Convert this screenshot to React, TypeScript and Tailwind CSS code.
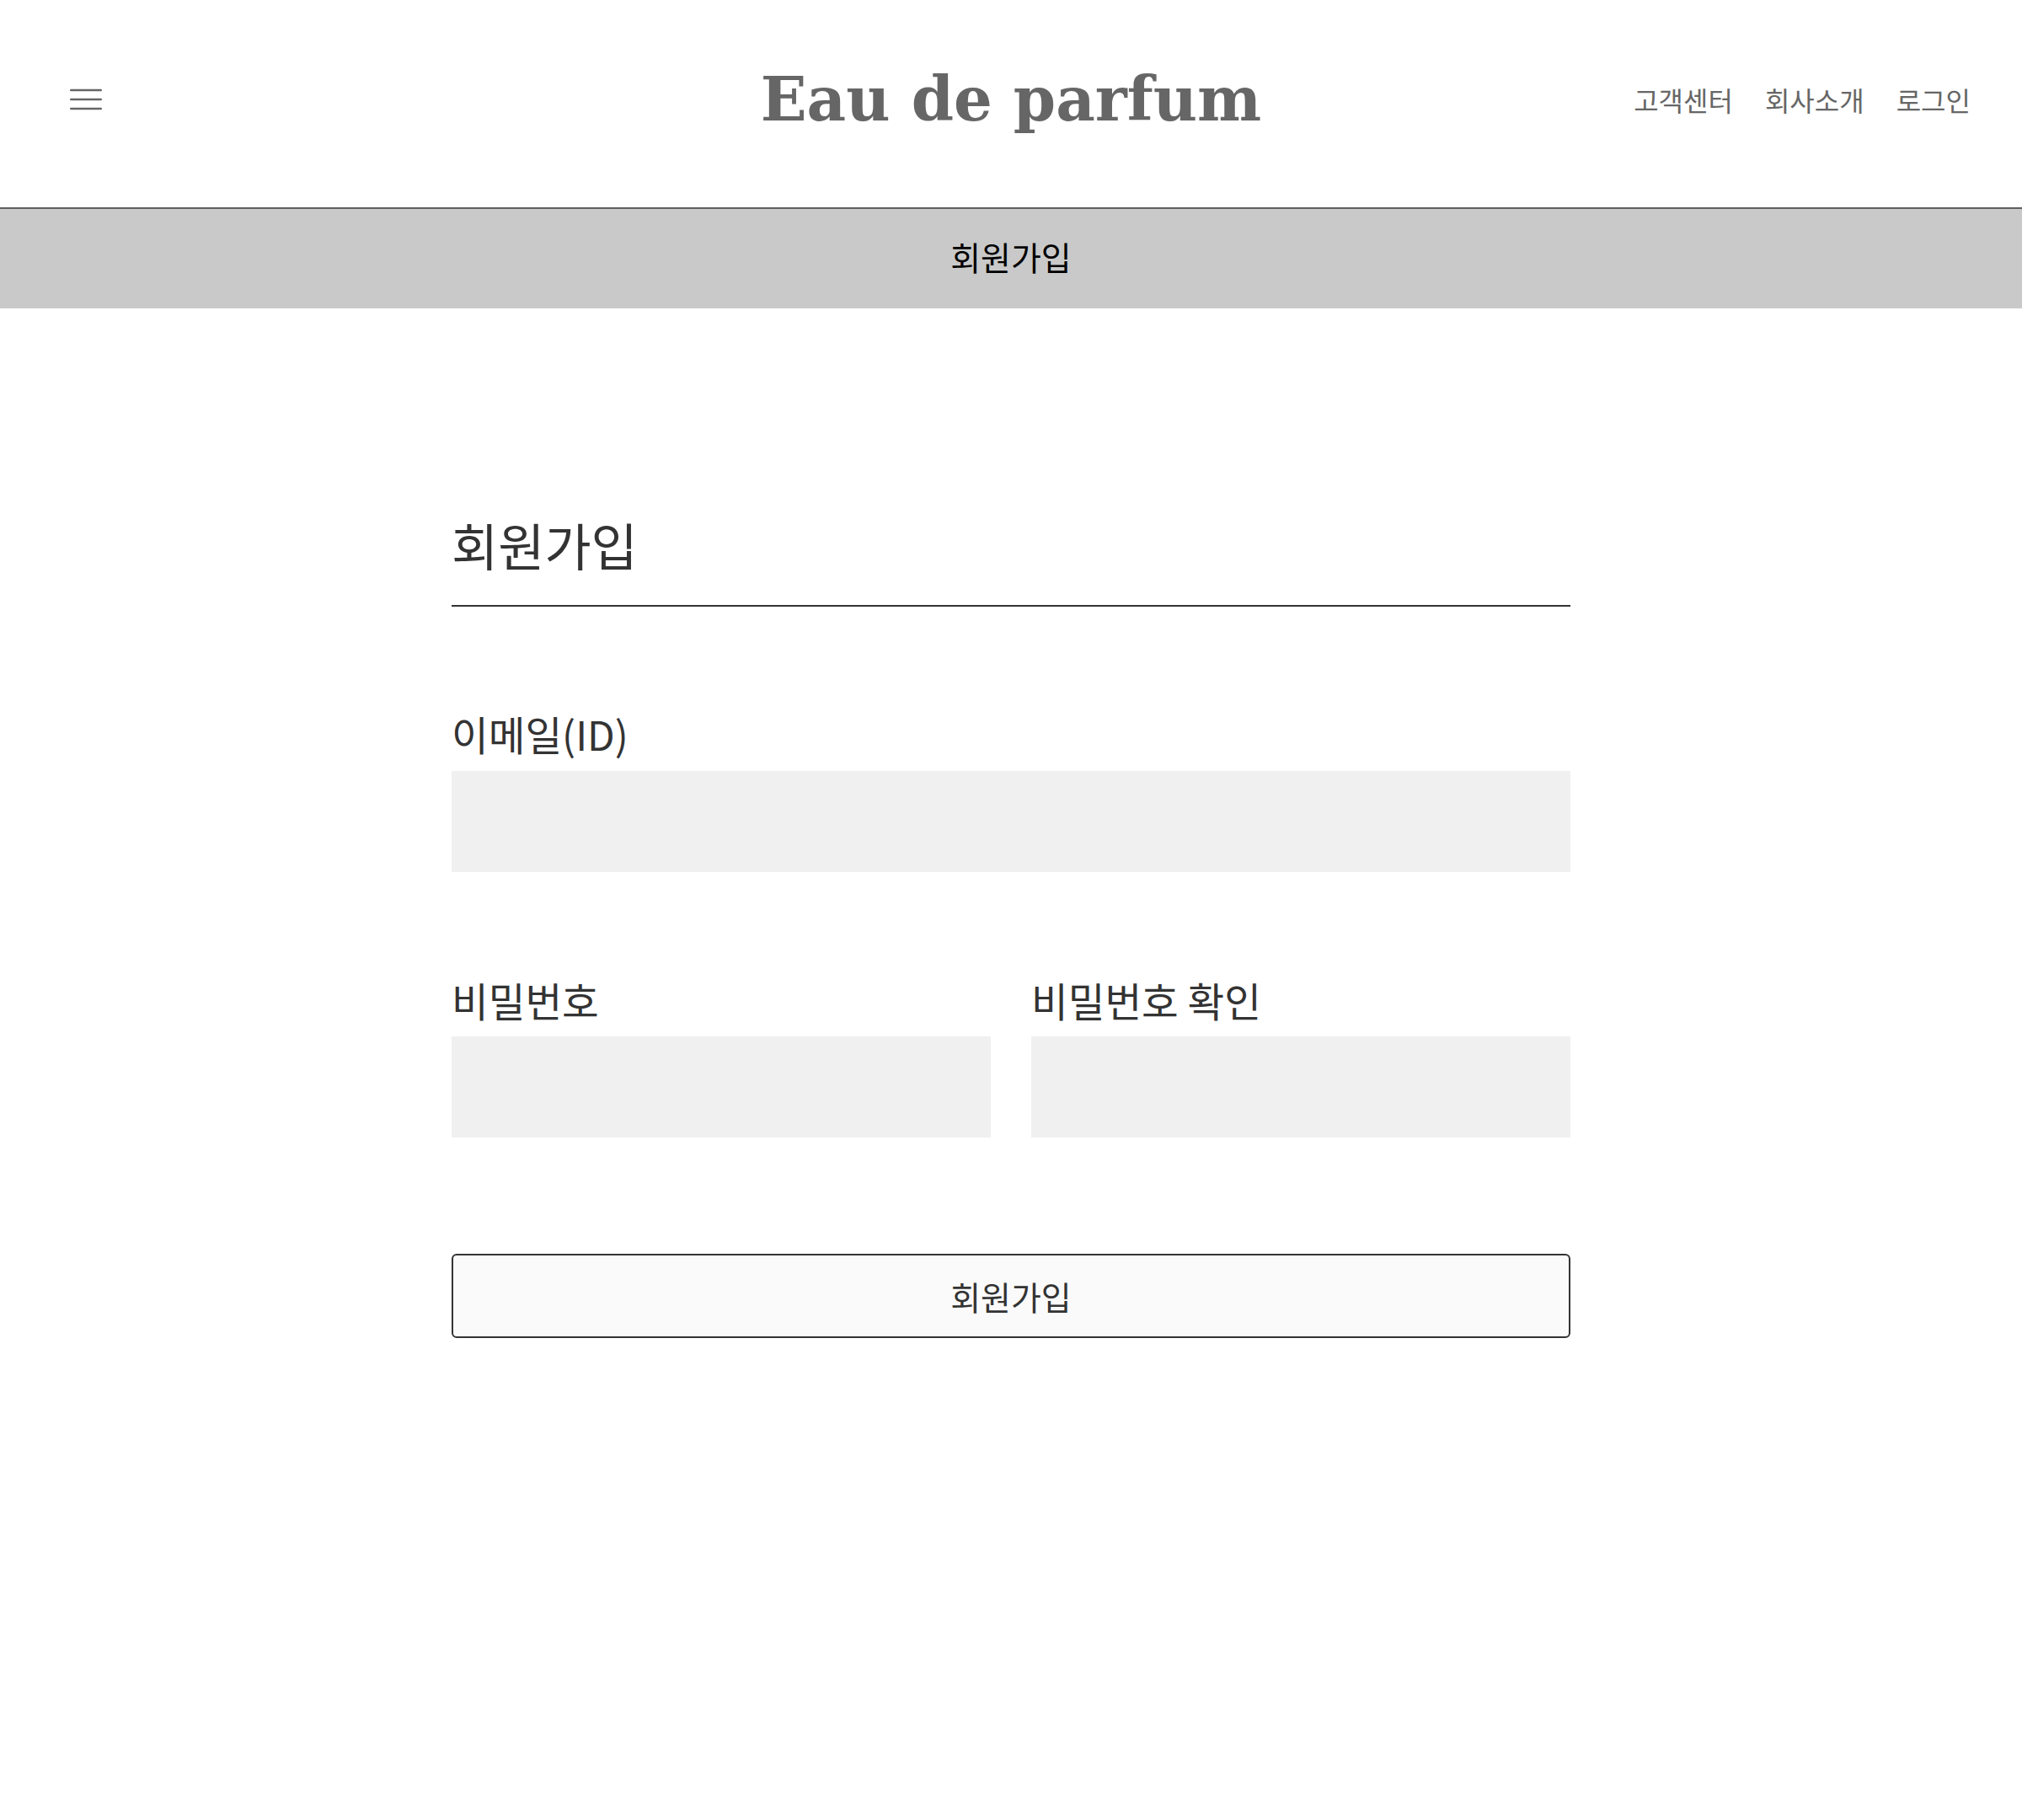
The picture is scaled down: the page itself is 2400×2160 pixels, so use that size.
import React from "react";

const KR = { fontFamily: '"Noto Sans CJK KR", "Noto Sans", sans-serif' };

function Hamburger() {
  return (
    <svg width="38" height="26" viewBox="0 0 38 26" fill="none" stroke="#666666" strokeWidth="2.6" strokeLinecap="round">
      <line x1="1.3" y1="2" x2="36.7" y2="2" />
      <line x1="1.3" y1="13" x2="36.7" y2="13" />
      <line x1="1.3" y1="24" x2="36.7" y2="24" />
    </svg>
  );
}

export default function App() {
  return (
    <div className="min-h-[2160px] w-full bg-white" style={KR}>
      <header className="grid h-[248px] grid-cols-[1fr_auto_1fr] items-center border-b-2 border-[#5f5f5f] px-[61px] pb-[10px]">
        <div className="flex items-center pl-[22px]">
          <Hamburger />
        </div>
        <h1
          className="text-[72px] font-bold leading-none text-[#666666]"
          style={{ fontFamily: '"DejaVu Serif", serif' }}
        >
          Eau de parfum
        </h1>
        <nav className="flex items-center justify-end gap-[38px] text-[32px] leading-none text-[#666666]">
          <span>고객센터</span>
          <span>회사소개</span>
          <span>로그인</span>
        </nav>
      </header>

      <div className="flex h-[118px] items-center justify-center bg-[#c9c9c9] pb-[6px] text-[39px] leading-none text-black">
        회원가입
      </div>

      <main className="mx-auto w-[1328px] pt-[250px]">
        <h2 className="border-b-2 border-[#333333] pb-[42px] text-[60px] font-normal leading-none text-[#333333]">
          회원가입
        </h2>

        <div className="mt-[127px]">
          <label className="mb-[20px] block text-[47.5px] leading-none text-[#333333]">이메일(ID)</label>
          <div className="h-[120px] w-full bg-[#f0f0f0]" />
        </div>

        <div className="mt-[128px] grid grid-cols-2 gap-[48px]">
          <div>
            <label className="mb-[20px] block text-[47.5px] leading-none text-[#333333]">비밀번호</label>
            <div className="h-[120px] w-full bg-[#f0f0f0]" />
          </div>
          <div>
            <label className="mb-[20px] block text-[47.5px] leading-none text-[#333333]">비밀번호 확인</label>
            <div className="h-[120px] w-full bg-[#f0f0f0]" />
          </div>
        </div>

        <button className="mt-[138px] flex h-[100px] w-full items-center justify-center rounded-[6px] border-2 border-[#333333] bg-[#fafafa] text-[39px] leading-none text-[#333333]">
          회원가입
        </button>
      </main>
    </div>
  );
}
